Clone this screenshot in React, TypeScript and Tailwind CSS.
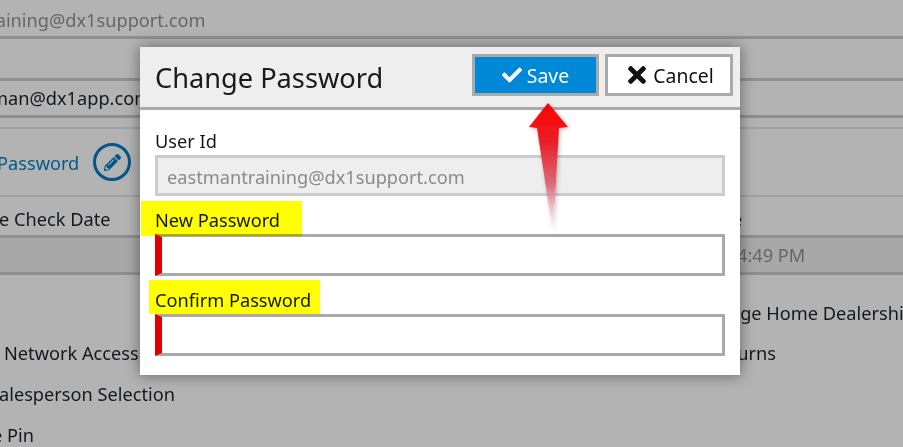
import { FaCheck, FaPencilAlt, FaTimes } from "react-icons/fa";

const font = { fontFamily: '"Noto Sans", "Open Sans", sans-serif' };

function Arrow() {
  return (
    <svg className="absolute left-[520px] top-[96px]" width="60" height="145" viewBox="0 0 60 145">
      <defs>
        <linearGradient id="arrowFill" x1="0" y1="0" x2="0" y2="1">
          <stop offset="0" stopColor="#ff0000" />
          <stop offset="0.3" stopColor="#ea1f28" />
          <stop offset="0.62" stopColor="#dc6a78" />
          <stop offset="1" stopColor="#ffffff" stopOpacity="0.3" />
        </linearGradient>
        <filter id="arrowShadow" x="-30%" y="-10%" width="160%" height="120%">
          <feDropShadow dx="1" dy="1" stdDeviation="2" floodColor="#000" floodOpacity="0.3" />
        </filter>
      </defs>
      <path d="M28 7 L48 31 L39 32 L33 138 L17 32 L9 31 Z" fill="url(#arrowFill)" filter="url(#arrowShadow)" />
    </svg>
  );
}

function RequiredInput() {
  return <div className="h-[42px] border-[3px] border-l-[7px] border-[#aaaaaa] border-l-[#e00000] bg-white" />;
}

export default function App() {
  return (
    <div className="relative w-[903px] h-[447px] overflow-hidden bg-[#b3b3b3] text-[#14181c] text-[18.2px] whitespace-nowrap" style={font}>
      {/* page behind the dialog */}
      <div className="flex flex-col">
        <div className="h-[39px] flex items-center pt-[6px] border-b-[3px] border-[#8f8f8f] text-[#666666]">
          <span className="-ml-[18px]">training@dx1support.com</span>
        </div>
        <div className="h-[39px]" />
        <div className="h-[40px] flex items-center pt-[1px] border-y-[3px] border-[#8f8f8f]">
          <span className="-ml-[9px]">man@dx1app.com</span>
        </div>
        <div className="h-[9px]" />
        <div className="h-[70px] flex items-center border-y-[2px] border-[#a1a1a1]">
          <span className="-ml-[3px] pt-[4px] text-[#005a8c]">Password</span>
          <span className="ml-[14px] w-[38px] h-[38px] rounded-full border-[3px] border-[#00588a] flex items-center justify-center text-[#00588a] text-[17px]">
            <FaPencilAlt />
          </span>
        </div>
        <div className="h-[38px] flex items-center pt-[8px]">
          <span className="w-[733px] -ml-[1px]">e Check Date</span>
          <span>e</span>
        </div>
        <div className="h-[40px] flex items-center pt-[2px] border-y-[3px] border-[#8f8f8f] bg-[#a8a8a8] text-[#666666]">
          <span className="ml-[737px]">4:49 PM</span>
        </div>
        <div className="h-[18px]" />
        <div className="h-[41px] flex items-center">
          <span className="ml-[696px]">Change Home Dealership</span>
        </div>
        <div className="h-[40px] flex items-center">
          <span className="w-[709px] pl-[4px]">Network Access</span>
          <span>Returns</span>
        </div>
        <div className="h-[40px] flex items-center pt-[2px]">
          <span className="-ml-[1px]">alesperson Selection</span>
        </div>
        <div className="h-[41px] flex items-center pt-[2px]">
          <span className="-ml-[8px]">e Pin</span>
        </div>
      </div>

      {/* dialog */}
      <div className="absolute left-[140px] top-[47px] w-[600px] h-[328px] bg-white shadow-[0_0_14px_rgba(0,0,0,0.45)]">
        <div className="h-[63px] flex items-center justify-between pl-[15px] pr-[7px] bg-[#eeeeee] border-b-[3px] border-[#aaaaaa]">
          <span className="pt-[2px] text-[27.2px] text-[#1a1a1a]">Change Password</span>
          <div className="flex gap-[6px] -mt-[4px] text-[19.4px]">
            <div className="w-[127px] h-[42px] flex items-center justify-center gap-[5px] border-[3px] border-[#aaaaaa] bg-[#0088d8] text-white">
              <FaCheck className="text-[20px]" />
              <span className="pt-[1px]">Save</span>
            </div>
            <div className="w-[128px] h-[42px] flex items-center justify-center gap-[3px] border-[3px] border-[#aaaaaa] bg-white text-[#111111]">
              <FaTimes className="text-[26px]" />
              <span className="pt-[1px]">Cancel</span>
            </div>
          </div>
        </div>
        <div className="flex flex-col px-[15px] pt-[19px]">
          <div className="h-[26px] leading-[25px]">User Id</div>
          <div className="h-[41px] flex items-center pl-[9px] pt-[4px] border-[3px] border-[#cccccc] bg-[#eeeeee] text-[#8a8a8a]">
            eastmantraining@dx1support.com
          </div>
          <div className="h-[38px] flex items-end">New Password</div>
          <RequiredInput />
          <div className="h-[38px] flex items-end">Confirm Password</div>
          <RequiredInput />
        </div>
      </div>

      {/* annotations on top of the screenshot */}
      <div className="absolute left-[141px] top-[201px] w-[161px] h-[35px] bg-[#ffff00] mix-blend-multiply" />
      <div className="absolute left-[149px] top-[280px] w-[171px] h-[34px] bg-[#ffff00] mix-blend-multiply" />
      <Arrow />
    </div>
  );
}
